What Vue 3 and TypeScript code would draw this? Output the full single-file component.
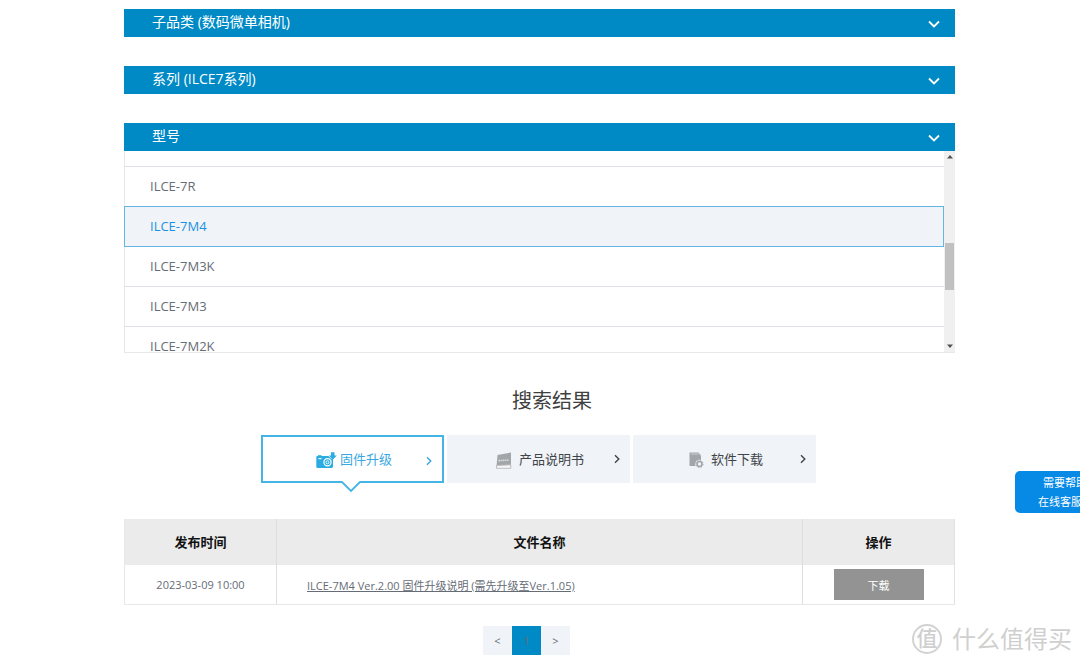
<script setup lang="ts">
import { ref } from 'vue'

interface Release {
  date: string
  title: string
}

const filters: string[] = ['子品类 (数码微单相机)', '系列 (ILCE7系列)', '型号']
const models: string[] = ['ILCE-7R', 'ILCE-7M4', 'ILCE-7M3K', 'ILCE-7M3', 'ILCE-7M2K']
const selected = ref('ILCE-7M4')

const tabs = [
  { id: 'firmware', label: '固件升级' },
  { id: 'manual', label: '产品说明书' },
  { id: 'software', label: '软件下载' },
]
const activeTab = ref('firmware')

const releases: Release[] = [
  { date: '2023-03-09 10:00', title: 'ILCE-7M4 Ver.2.00 固件升级说明 (需先升级至Ver.1.05)' },
]
</script>

<template>
  <div class="page">
    <main class="content">
      <div class="filters">
        <button v-for="f in filters" :key="f" class="bar" type="button">
          <span>{{ f }}</span>
          <svg class="chevron" viewBox="0 0 12 8" aria-hidden="true">
            <path d="M1 1.5 L6 6.5 L11 1.5" fill="none" stroke="#fff" stroke-width="1.8" />
          </svg>
        </button>
      </div>

      <div class="list-box">
        <ul class="models">
          <li class="model partial"></li>
          <li v-for="m in models" :key="m" class="model">
            <button
              type="button"
              class="model-btn"
              :class="{ selected: m === selected }"
              @click="selected = m"
            >{{ m }}</button>
          </li>
        </ul>
        <div class="scrollbar" aria-hidden="true">
          <svg class="arrow" viewBox="0 0 6 4"><path d="M3 0 L6 3.5 H0 Z" fill="#505050" /></svg>
          <div class="track"><div class="thumb"></div></div>
          <svg class="arrow" viewBox="0 0 6 4"><path d="M0 0.5 H6 L3 4 Z" fill="#505050" /></svg>
        </div>
      </div>

      <h2 class="title">搜索结果</h2>

      <div class="tabs">
        <button
          v-for="t in tabs"
          :key="t.id"
          type="button"
          class="tab"
          :class="{ active: t.id === activeTab }"
          @click="activeTab = t.id"
        >
          <svg v-if="t.id === 'firmware'" class="icon camera" viewBox="0 0 21 16" aria-hidden="true">
            <path d="M1.500 4 H12.500 L15 6.500 L17 7.500 V14.500 Q17 16 15.500 16 H1.500 Q0.300 16 0.300 14.500 V5.200 Q0.300 4 1.500 4 Z" fill="#2aace2" />
            <path d="M2 4 V3.200 H5.500 V4 Z" fill="#2aace2" />
            <rect x="2.500" y="6" width="3" height="1.200" fill="#fff" />
            <circle cx="11.500" cy="10.300" r="3.600" fill="#2aace2" stroke="#fff" stroke-width="1.200" />
            <circle cx="11.500" cy="10.300" r="1.500" fill="none" stroke="#fff" stroke-width="0.900" />
            <path d="M15 0.300 H18.500 V3.500 H20.800 L16.800 7.800 L12.800 3.500 H15 Z" fill="#2aace2" />
          </svg>
          <svg v-else-if="t.id === 'manual'" class="icon book" viewBox="0 0 16 17" aria-hidden="true">
            <path d="M1.500 3 L15 0.500 V13 L0.500 14 Z" fill="#a3a6a9" />
            <path d="M0.500 13.500 V16.300 H14.800 V12.800 Z" fill="#f7f7f7" stroke="#b5b7ba" stroke-width="0.900" />
            <path d="M2.500 8.600 H4 M4.500 8.500 H6 M6.500 8.400 H8 M8.500 8.300 H10 M10.500 8.200 H12.500" stroke="#d8dadc" stroke-width="1.600" />
          </svg>
          <svg v-else class="icon card" viewBox="0 0 15 16" aria-hidden="true">
            <path d="M1 0.500 H9.500 L12 3.500 V14 H1 Q0.500 14 0.500 13.500 V1 Q0.500 0.500 1 0.500 Z" fill="#a3a6a9" />
            <path d="M3 1 V3 M5 1 V3 M7 1 V3 M9 1 V3" stroke="#d4d6d9" stroke-width="0.800" />
            <circle cx="10.500" cy="12" r="4.300" fill="#f0f3f8" />
            <circle cx="10.500" cy="12" r="2.500" fill="none" stroke="#a3a6a9" stroke-width="1.600" />
            <circle cx="10.500" cy="12" r="3.600" fill="none" stroke="#a3a6a9" stroke-width="0.900" stroke-dasharray="1.400 1.420" />
          </svg>
          <span>{{ t.label }}</span>
          <svg class="next" viewBox="0 0 6 10" aria-hidden="true">
            <path d="M1 1.300 L4.800 5 L1 8.700" fill="none" stroke="currentColor" stroke-width="1.400" />
          </svg>
          <svg v-if="t.id === activeTab" class="pointer" viewBox="0 0 20 12" aria-hidden="true">
            <path d="M0 0 H20 V1 L10 11 L0 1 Z" fill="#fff" />
            <path d="M0 1 H1 L10 10 L19 1 H20" fill="none" stroke="#45b5e6" stroke-width="1.800" />
          </svg>
        </button>
      </div>

      <table class="results">
        <thead>
          <tr>
            <th class="side" scope="col">发布时间</th>
            <th scope="col">文件名称</th>
            <th class="side" scope="col">操作</th>
          </tr>
        </thead>
        <tbody>
          <tr v-for="r in releases" :key="r.title">
            <td>{{ r.date }}</td>
            <td class="name"><a href="#">{{ r.title }}</a></td>
            <td><button type="button" class="download">下载</button></td>
          </tr>
        </tbody>
      </table>

      <nav class="pager" aria-label="分页">
        <button type="button">&lt;</button>
        <button type="button" class="current">1</button>
        <button type="button">&gt;</button>
      </nav>
    </main>

    <a class="help" href="#">
      <span class="ask">需要帮助</span>
      <span>在线客服</span>
    </a>

    <div class="brand">
      <span class="seal">值</span>
      <span>什么值得买</span>
    </div>
  </div>
</template>

<style>
body {
  margin: 0;
  overflow: hidden;
}
</style>

<style scoped>
.page {
  position: relative;
  min-height: 100vh;
  overflow: hidden;
  background: #fff;
  font-family: "Open Sans", "Noto Sans CJK SC", sans-serif;
  color: #666c76;
}
.page * {
  box-sizing: border-box;
}
button {
  margin: 0;
  padding: 0;
  border: 0;
  font-family: inherit;
  color: inherit;
  cursor: pointer;
}
.content {
  padding: 9px 125px 0 124px;
}
.filters {
  display: flex;
  flex-direction: column;
  gap: 29px;
}
.bar {
  display: flex;
  align-items: center;
  justify-content: space-between;
  height: 28px;
  padding: 0 15px 2px 28px;
  background: #008ac5;
  color: #fff;
  font-size: 14px;
  line-height: 20px;
}
.chevron {
  width: 12px;
  height: 8px;
  margin-top: 4px;
}
.list-box {
  display: flex;
  height: 202px;
  border: 1px solid #e6e8ea;
  border-top: 0;
  border-right: 0;
}
.models {
  flex: 1;
  height: 201px;
  margin: 0 0 0 -1px;
  padding: 0;
  overflow: hidden;
  list-style: none;
}
.model {
  height: 40px;
}
.partial {
  height: 15px;
  border-left: 1px solid #e6e8ea;
}
.model-btn {
  display: block;
  width: 100%;
  height: 41px;
  padding: 0 25px 2px;
  border-top: 1px solid #dde1e5;
  border-left: 1px solid #e6e8ea;
  background: #fff;
  font-size: 13px;
  text-align: left;
}
.model-btn.selected {
  position: relative;
  border: 1px solid #63b5e4;
  padding-bottom: 1px;
  background: #f0f3f8;
  color: #1b91e0;
}
.scrollbar {
  display: flex;
  flex-direction: column;
  align-items: center;
  width: 11px;
  padding: 4px 0;
  background: #f0f0f0;
}
.arrow {
  width: 6px;
  height: 4px;
}
.track {
  flex: 1;
  padding-top: 84px;
}
.thumb {
  width: 9px;
  height: 47px;
  background: #c1c1c1;
}
.title {
  margin: 33px 0 19px;
  padding-left: 25px;
  font-size: 20px;
  font-weight: 400;
  line-height: 30px;
  text-align: center;
  color: #404040;
}
.tabs {
  display: flex;
  justify-content: center;
  gap: 3px;
  padding-right: 3px;
}
.tab {
  position: relative;
  display: flex;
  align-items: center;
  justify-content: center;
  width: 183px;
  height: 48px;
  padding: 0 0 2px 4px;
  background: #f0f3f8;
  color: #404448;
  font-size: 13px;
}
.tab.active {
  border: 2px solid #45b5e6;
  background: #fff;
  color: #3ba8df;
}
.icon {
  flex: none;
  margin-top: 4px;
}
.camera {
  width: 21px;
  height: 16px;
  margin-right: 3px;
}
.book {
  width: 16px;
  height: 17px;
  margin-right: 7px;
}
.card {
  width: 15px;
  height: 16px;
  margin-right: 7px;
}
.next {
  position: absolute;
  right: 10px;
  top: 19px;
  width: 6px;
  height: 10px;
}
.pointer {
  position: absolute;
  left: 50%;
  bottom: -12px;
  width: 20px;
  height: 12px;
  margin-left: -11px;
}
.results {
  width: 100%;
  margin-top: 36px;
  border-collapse: separate;
  border-spacing: 0;
  border-right: 1px solid #e2e2e2;
  table-layout: fixed;
  font-size: 11px;
}
.results th,
.results td {
  padding: 0;
  border-left: 1px solid #dedede;
  text-align: center;
}
.results th {
  height: 46px;
  padding-bottom: 2px;
  background: #ebebeb;
  color: #111;
  font-size: 13px;
  font-weight: 700;
}
.results td {
  height: 40px;
  border-bottom: 1px solid #e8e8e8;
}
.results .side {
  width: 152px;
}
.results th:first-child,
.results td:first-child {
  border-left-color: #e8e8e8;
}
.results .name {
  padding-left: 30px;
  text-align: left;
}
.name a {
  color: inherit;
}
.download {
  display: block;
  width: 90px;
  height: 31px;
  margin: 0 auto;
  background: #939393;
  color: #fff;
  font-size: 11px;
}
.pager {
  display: flex;
  justify-content: center;
  margin-top: 21px;
  padding-right: 26px;
}
.pager button {
  width: 29px;
  height: 29px;
  background: #f0f3f8;
  font-size: 11px;
}
.pager .current {
  background: #008ac5;
}
.help {
  position: absolute;
  top: 471px;
  right: -20px;
  display: flex;
  flex-direction: column;
  width: 85px;
  height: 42px;
  padding: 2px 0 0 23px;
  border-radius: 5px;
  background: #0789e6;
  color: #fff;
  font-size: 11px;
  line-height: 19px;
  text-decoration: none;
  white-space: nowrap;
}
.ask {
  padding-left: 5px;
}
.brand {
  position: absolute;
  right: 8px;
  bottom: 9px;
  display: flex;
  align-items: center;
  gap: 10px;
  color: #cfcfcf;
  font-size: 24px;
  line-height: 34px;
}
.seal {
  width: 30px;
  height: 30px;
  border: 2px solid #d2d2d2;
  border-radius: 50%;
  font-size: 21px;
  font-weight: 500;
  line-height: 25px;
  text-align: center;
}
</style>
